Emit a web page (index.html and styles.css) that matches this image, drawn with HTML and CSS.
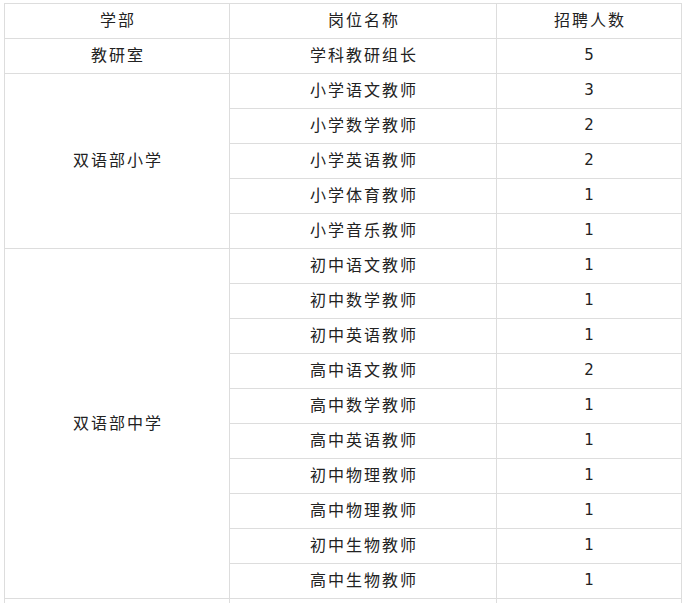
FILE: index.html
```html
<!DOCTYPE html>
<html lang="zh">
<head>
<meta charset="utf-8">
<title>招聘岗位</title>
<link rel="stylesheet" href="styles.css">
</head>
<body>
<table class="jobs">
  <colgroup>
    <col class="c1"><col class="c2"><col class="c3">
  </colgroup>
  <tr><td>学部</td><td>岗位名称</td><td>招聘人数</td></tr>
  <tr><td>教研室</td><td>学科教研组长</td><td class="num">5</td></tr>
  <tr><td rowspan="5">双语部小学</td><td>小学语文教师</td><td class="num">3</td></tr>
  <tr><td>小学数学教师</td><td class="num">2</td></tr>
  <tr><td>小学英语教师</td><td class="num">2</td></tr>
  <tr><td>小学体育教师</td><td class="num">1</td></tr>
  <tr><td>小学音乐教师</td><td class="num">1</td></tr>
  <tr><td rowspan="10">双语部中学</td><td>初中语文教师</td><td class="num">1</td></tr>
  <tr><td>初中数学教师</td><td class="num">1</td></tr>
  <tr><td>初中英语教师</td><td class="num">1</td></tr>
  <tr><td>高中语文教师</td><td class="num">2</td></tr>
  <tr><td>高中数学教师</td><td class="num">1</td></tr>
  <tr><td>高中英语教师</td><td class="num">1</td></tr>
  <tr><td>初中物理教师</td><td class="num">1</td></tr>
  <tr><td>高中物理教师</td><td class="num">1</td></tr>
  <tr><td>初中生物教师</td><td class="num">1</td></tr>
  <tr><td>高中生物教师</td><td class="num">1</td></tr>
  <tr><td></td><td></td><td class="num"></td></tr>
</table>
</body>
</html>
```
FILE: styles.css
```css
html, body {
  margin: 0;
  background: #fff;
}
body {
  padding: 3px 0 0 4px;
  font-family: "Noto Sans CJK SC", "Microsoft YaHei", sans-serif;
  color: #222;
}
.jobs {
  border-collapse: collapse;
  table-layout: fixed;
  width: 677px;
}
.c1 { width: 225px; }
.c2 { width: 267px; }
.c3 { width: 185px; }
.jobs td {
  border: 1px solid #dddddd;
  height: 30px;
  padding: 0 0 4px 0;
  text-align: center;
  vertical-align: middle;
  font-size: 16px;
  letter-spacing: 2px;
  line-height: 20px;
  text-indent: 2px;
}
.jobs td.num {
  font-family: "DejaVu Sans", sans-serif;
  font-size: 15px;
  letter-spacing: 0;
  text-indent: 0;
  padding-bottom: 3px;
  height: 31px;
}
```
